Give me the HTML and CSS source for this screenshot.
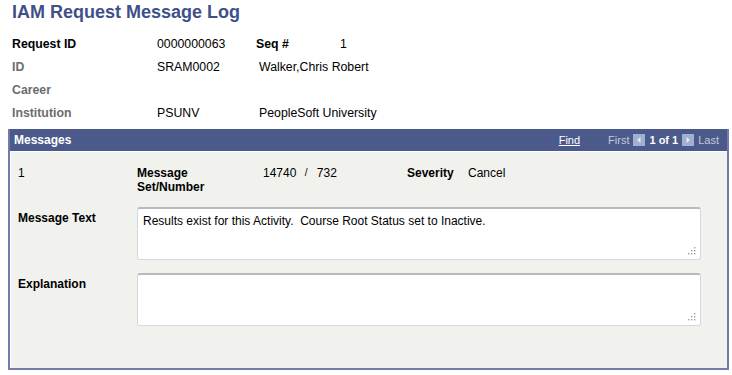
FILE: index.html
```html
<!DOCTYPE html>
<html lang="en">
<head>
  <meta charset="UTF-8" />
  <title>IAM Request Message Log</title>
  <link rel="stylesheet" href="styles.css">
</head>
<body>

<!-- Page title -->
<h1 class="page-title">IAM Request Message Log</h1>

<!-- Request info -->
<div class="request-info">
  <span class="lbl lbl-main">Request ID</span>
  <span class="val">0000000063</span>
  <span class="lbl lbl-main">Seq #</span>
  <span class="val">1</span>

  <span class="lbl">ID</span>
  <span class="val">SRAM0002</span>
  <span class="val val-wide">Walker,Chris Robert</span>

  <span class="lbl">Career</span>
  <span class="val"></span>
  <span class="val val-wide"></span>

  <span class="lbl">Institution</span>
  <span class="val">PSUNV</span>
  <span class="val val-wide">PeopleSoft University</span>
</div>

<!-- Messages grid -->
<section class="panel">
  <div class="panel-head">
    <span class="panel-title">Messages</span>
    <div class="panel-nav">
      <a href="#" class="find-link">Find</a>
      <span class="nav-dim">First</span>
      <svg class="nav-btn" width="12" height="12" viewBox="0 0 12 12">
        <rect x="0" y="0" width="12" height="12" fill="#9fb0d0"/>
        <path d="M7.5 3 L4 6 L7.5 9 Z" fill="#e4eaf4"/>
      </svg>
      <span class="nav-count">1 of 1</span>
      <svg class="nav-btn" width="12" height="12" viewBox="0 0 12 12">
        <rect x="0" y="0" width="12" height="12" fill="#9fb0d0"/>
        <path d="M4.5 3 L8 6 L4.5 9 Z" fill="#e4eaf4"/>
      </svg>
      <span class="nav-dim">Last</span>
    </div>
  </div>

  <div class="panel-body">
    <div class="msg-row">
      <span class="txt">1</span>
      <span class="lbl-main">Message<br>Set/Number</span>
      <span class="txt set-num">14740 <span class="slash">/</span> 732</span>
      <span class="lbl-main">Severity</span>
      <span class="txt">Cancel</span>
    </div>

    <div class="field-row">
      <span class="lbl-main field-lbl">Message Text</span>
      <div class="box">
        <textarea class="long-edit" readonly>Results exist for this Activity.  Course Root Status set to Inactive.</textarea>
        <svg class="grip" width="10" height="10" viewBox="0 0 10 10">
          <rect x="8" y="1" width="1.4" height="1.4" fill="#9aa0a8"/>
          <rect x="5" y="4" width="1.4" height="1.4" fill="#9aa0a8"/>
          <rect x="8" y="4" width="1.4" height="1.4" fill="#9aa0a8"/>
          <rect x="2" y="7" width="1.4" height="1.4" fill="#9aa0a8"/>
          <rect x="5" y="7" width="1.4" height="1.4" fill="#9aa0a8"/>
          <rect x="8" y="7" width="1.4" height="1.4" fill="#9aa0a8"/>
        </svg>
      </div>
    </div>

    <div class="field-row">
      <span class="lbl-main field-lbl">Explanation</span>
      <div class="box">
        <textarea class="long-edit" readonly></textarea>
        <svg class="grip" width="10" height="10" viewBox="0 0 10 10">
          <rect x="8" y="1" width="1.4" height="1.4" fill="#9aa0a8"/>
          <rect x="5" y="4" width="1.4" height="1.4" fill="#9aa0a8"/>
          <rect x="8" y="4" width="1.4" height="1.4" fill="#9aa0a8"/>
          <rect x="2" y="7" width="1.4" height="1.4" fill="#9aa0a8"/>
          <rect x="5" y="7" width="1.4" height="1.4" fill="#9aa0a8"/>
          <rect x="8" y="7" width="1.4" height="1.4" fill="#9aa0a8"/>
        </svg>
      </div>
    </div>
  </div>
</section>

</body>
</html>
```

FILE: styles.css
```css
body {
  margin: 0;
  font-family: "Liberation Sans", Arial, sans-serif;
  font-size: 12px;
  color: #000;
  background: #fff;
}

.page-title {
  margin: 0;
  padding: 2px 0 0 12px;
  font-size: 18px;
  font-weight: bold;
  color: #3f4f88;
  line-height: 20px;
}

/* header fields */
.request-info {
  display: grid;
  grid-template-columns: 145px 99px 84px 1fr;
  grid-auto-rows: 23px;
  align-items: center;
  padding: 10px 0 0 12px;
  font-size: 12.3px;
}

.lbl {
  font-weight: bold;
  color: #6c6c6c;
}

.lbl-main {
  font-weight: bold;
  color: #000;
}

.val-wide {
  grid-column: span 2;
  padding-left: 3px;
}

/* messages panel */
.panel {
  margin: 5px 3px 0 8px;
  border: 2px solid #737ba9;
  border-top: 0;
  background: #f1f2ed;
}

.panel-head {
  display: flex;
  justify-content: space-between;
  align-items: center;
  height: 22px;
  background: #4b5a8b;
  padding: 0 8px 0 4px;
  color: #fff;
}

.panel-title {
  font-weight: bold;
  font-size: 12px;
}

.panel-nav {
  display: flex;
  align-items: center;
  font-size: 11px;
}

.find-link {
  color: #fff;
  text-decoration: underline;
  margin-right: 28px;
}

.nav-dim {
  color: #c4c9dc;
}

.nav-btn {
  margin: 0 4px;
}

.nav-count {
  font-weight: bold;
  color: #fff;
}

.panel-body {
  border-top: 1px solid #fff;
  border-left: 1px solid #fff;
  padding: 13px 0 42px 7px;
}

.msg-row {
  display: grid;
  grid-template-columns: 119px 126px 144px 61px 1fr;
  align-items: start;
  line-height: 14px;
  padding-top: 1px;
}

.set-num .slash {
  display: inline-block;
  margin: 0 6px 0 5px;
  font-size: 10px;
  vertical-align: top;
}

.field-row {
  display: grid;
  grid-template-columns: 119px 564px;
  margin-top: 13px;
}

.field-lbl {
  padding-top: 4px;
}

.box {
  position: relative;
  height: 53px;
}

.long-edit {
  display: block;
  box-sizing: border-box;
  width: 564px;
  height: 53px;
  margin: 0;
  padding: 5px 5px;
  border: 1px solid #d3d8e2;
  border-top: 2px solid #b7b9bd;
  border-radius: 3px;
  background: #fff;
  font-family: "Liberation Sans", Arial, sans-serif;
  font-size: 12px;
  color: #000;
  resize: none;
  outline: none;
  overflow: hidden;
}

.grip {
  position: absolute;
  right: 5px;
  bottom: 4px;
}
```
